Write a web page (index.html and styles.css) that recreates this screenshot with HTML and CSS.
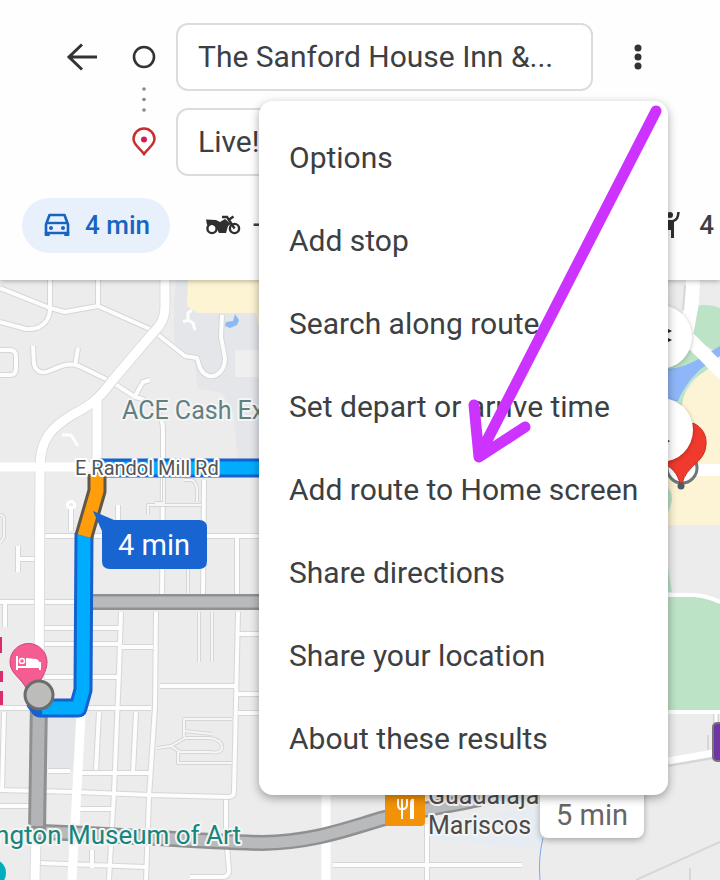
FILE: index.html
```html
<!DOCTYPE html>
<html lang="en">
<head>
<meta charset="utf-8">
<meta name="viewport" content="width=device-width, initial-scale=1">
<title>Directions</title>
<link rel="stylesheet" href="styles.css">
</head>
<body>
<div class="app">
  <header class="header">
    <div class="route">
      <button class="icon-button" aria-label="Back">
        <svg width="32" height="28" viewBox="0 0 32 28"><path d="M31 14H3M16 1.500L3 14l13 12.500" fill="none" stroke="#333" stroke-width="3"/></svg>
      </button>
      <div class="markers">
        <svg width="28" height="120" viewBox="0 0 28 120">
          <circle cx="14" cy="18" r="10" fill="none" stroke="#333" stroke-width="2.6"/>
          <g fill="#888"><circle cx="14" cy="50" r="1.8"/><circle cx="14" cy="60.500" r="1.8"/><circle cx="14" cy="71" r="1.8"/></g>
          <path d="M14 115C10 109 3.500 106 3.500 100a10.500 10.500 0 0 1 21 0C24.500 106 18 109 14 115z" fill="#fff" stroke="#c5312d" stroke-width="2.500"/>
          <circle cx="14" cy="100.500" r="3" fill="#d81b50"/>
        </svg>
      </div>
      <form class="fields">
        <input class="field" type="text" aria-label="Starting point" value="The Sanford House Inn &amp;...">
        <input class="field" type="text" aria-label="Destination" value="Live!">
      </form>
      <button class="icon-button" aria-label="More options">
        <svg width="10" height="28" viewBox="0 0 10 28"><g fill="#333"><circle cx="5" cy="5" r="3.500"/><circle cx="5" cy="14" r="3.500"/><circle cx="5" cy="23" r="3.500"/></g></svg>
      </button>
    </div>
    <nav class="modes" aria-label="Travel modes">
      <button class="mode mode-active">
        <svg width="28" height="24" viewBox="0 0 28 24"><path fill="none" stroke="#1765c1" stroke-width="2.600" stroke-linejoin="round" d="M3 11.500L6.500 2h15L25 11.500V20H3z"/><path stroke="#1765c1" stroke-width="2.400" d="M3 10h22"/><path fill="#1765c1" d="M1.700 19h5v4h-5zM21.300 19h5v4h-5z"/><circle cx="8" cy="15" r="2" fill="#1765c1"/><circle cx="20" cy="15" r="2" fill="#1765c1"/></svg>
        <span>4 min</span>
      </button>
      <button class="mode mode-bike" aria-label="Motorcycle">
        <svg width="36" height="20" viewBox="0 0 36 20"><g fill="none" stroke="#2f2f2f" stroke-width="2.400"><circle cx="6" cy="13.500" r="4.600"/><circle cx="28.500" cy="13.500" r="4.600"/><path d="M28.500 13.500L21 2h-5M22.500 5l5-3.500"/></g><path fill="#2f2f2f" d="M0 4.500l10 .5 4 2 5-3 6 5-3 2-2 7h-7l-3-6-5-3-4 1z"/></svg>
        <span>—</span>
      </button>
      <button class="mode mode-hail" aria-label="Ride service 4 min">
        <svg width="22" height="28" viewBox="0 0 22 28"><circle cx="11" cy="4" r="3" fill="#2f2f2f"/><path d="M5 9h10v18h-3v-8h-3v8H5z" fill="#2f2f2f"/><path d="M13 10.500c5-1 6-4 6.500-9.500" fill="none" stroke="#2f2f2f" stroke-width="2.600"/></svg>
        <span>4</span>
      </button>
    </nav>
  </header>

  <main class="map">
    <svg class="map-canvas" viewBox="0 280 720 600" preserveAspectRatio="xMidYMin slice" role="img" aria-label="Route map">
      <rect y="280" width="720" height="600" fill="#ececed"/>
      <path fill="#e5e6ea" d="M176 280h84v185h-22l-4-50-12-22-24-4-4-28-20-18v-40zM48 714h28l-3 56H48z"/>
      <path fill="#fdf4d3" d="M188 280h72v52l-4-19h-58l-11-7z"/>
      <path fill="#efeff0" d="M235 350h25v27h-25z"/>
      <path fill="#8ab9f3" d="M233 321l2-7 4 6-2 5-7 3-5-2 1-4z"/>
      <path fill="#e6ecf2" d="M432 822l108-15 4 25-6 18-110-12z"/>

      <path fill="#fdf4d6" d="M668 420l16-24 16-22 20-12v163h-52z"/>
      <path fill="#bce3c6" d="M720 308c-8-3-16-4-24-2l-7 30 31 18zM664 370l30-23 14 22-14 10q-10 10-12 26h-18zM668 488q8 8 0 24zM668 568l4 24h-4z"/>
      <path fill="#8fb6f8" d="M664 369c22 0 34-10 56-23v10c-18 10-32 22-42 45h-14z"/>
      <path fill="#bce3c6" d="M660 597h36c10 1 18 4 24 7v106h-60z"/>

      <g fill="none" stroke-linejoin="round">
        <g stroke="#d5d6d8" stroke-width="6">
          <path d="M0 288l50 20 15 4 33-6 54 24 33 26 12 2 3 10c8 15 25 8 25-10l-4-21 1-22M50 280v28c0 16-12 22-24 21l-26-7M98 280v26M33 346l1 18c2 8 8 10 15 7 16-7 20-8 30-5l33 16 23 15c18 3 28 18 28 33v32M78 348l-3 18M135 396l8-14 7-2"/>
          <path d="M0 350h10q6 0 6 7v11q0 7-6 7H0M42 536h220M0 602h76M5 602v25M163 472l-1 131M204 480l-1 120M237 538v60M118 505v20M71 506v25M18 546v26M18 559h20"/>
          <path d="M43 628h76M43 644h76M43 677h76M121 612l-2 60-5 120-5 88M156 612l-1 95-6 90-3 83M0 708h151M160 686h76M122 647h31M238 612l-4 180q0 5-6 5l-78-2-75-3-75-2M48 771h22M82 773h67M99 712l-3 58M136 712l-3 60M226 800v35l3 35q0 7-7 7h-32M80 809h32M0 806h30M40 863l105 4M238 634h22M238 694h22M238 713h22M4 712l-2 80M92 850v18"/>
          <path d="M427 824v56M333 865h189M668 764l52-9M716 714v20"/>
        </g>
        <g stroke="#fdfdfd" stroke-width="4">
          <path d="M0 288l50 20 15 4 33-6 54 24 33 26 12 2 3 10c8 15 25 8 25-10l-4-21 1-22M50 280v28c0 16-12 22-24 21l-26-7M98 280v26M33 346l1 18c2 8 8 10 15 7 16-7 20-8 30-5l33 16 23 15c18 3 28 18 28 33v32M78 348l-3 18M135 396l8-14 7-2"/>
          <path d="M0 350h10q6 0 6 7v11q0 7-6 7H0M42 536h220M0 602h76M5 602v25M163 472l-1 131M204 480l-1 120M237 538v60M118 505v20M71 506v25M18 546v26M18 559h20"/>
          <path d="M43 628h76M43 644h76M43 677h76M121 612l-2 60-5 120-5 88M156 612l-1 95-6 90-3 83M0 708h151M160 686h76M122 647h31M238 612l-4 180q0 5-6 5l-78-2-75-3-75-2M48 771h22M82 773h67M99 712l-3 58M136 712l-3 60M226 800v35l3 35q0 7-7 7h-32M80 809h32M0 806h30M40 863l105 4M238 634h22M238 694h22M238 713h22M4 712l-2 80M92 850v18"/>
          <path d="M333 865h189M427 824v56"/>
        </g>
        <path stroke="#fdfdfd" stroke-width="3" d="M195 330l-2-7-5-3M183 322l5-2 0-7 4-3M62 435h9l7 11"/>
        <g stroke="#d5d6d8" stroke-width="4">
          <path d="M148 515v-10h53M164 470v33h-9M184 480h8q5 3 5 10v12M199 612v50M212 612v50M188 548v45M157 748l14-2 14-8h25q12 2 12 9t-12 5h-30l-9-6M184 737v-18h48M178 752v11h54M184 731l28 3M0 515q5 0 4 8v14l-4 6"/>
        </g>
        <g stroke="#f6f6f6" stroke-width="2">
          <path d="M148 515v-10h53M164 470v33h-9M184 480h8q5 3 5 10v12M199 612v50M212 612v50M188 548v45M157 748l14-2 14-8h25q12 2 12 9t-12 5h-30l-9-6M184 737v-18h48M178 752v11h54M184 731l28 3M0 515q5 0 4 8v14l-4 6"/>
        </g>
        <path stroke="#dcddde" stroke-width="11" d="M165 280v25c0 14-4 20-13 29l-40 47c-14 20-25 26-40 34-20 12-32 24-32 52l-1 230-4 183M97 400v70"/>
        <g stroke="#fff">
          <path stroke-width="9" d="M165 280v25c0 14-4 20-13 29l-40 47c-14 20-25 26-40 34-20 12-32 24-32 52l-1 230-4 183M97 400v70M0 467h262M81 715l-9 165M326 790v90"/>
          <circle cx="71" cy="505" r="3.500" stroke-width="3"/>
          <path stroke-width="14" d="M693 280l-1 22-6 34 38 38"/>
          <path stroke-width="12" d="M696 470h24"/>
          <path stroke-width="4" d="M668 595h26q14 1 26 7M668 712h52"/>
          <path stroke-width="7" d="M668 761l52-9"/>
          <path stroke-width="3" d="M716 714v20"/>
        </g>
        <path stroke="#d7d7d8" stroke-width="2" d="M636 880l84-38M690 880v-12M708 735v15M683 310l2-25"/>
        <path stroke="#7fa7e8" stroke-width="1" d="M543 838q-5 20-3 42"/>

        <path stroke="#8f9091" stroke-width="16" d="M90 602h172M37 832c80 2 160 10 225 11 55-1 90-16 123-25 30-7 60-12 95-19"/>
        <path stroke="#b9babb" stroke-width="11" d="M90 602h172M37 832c80 2 160 10 225 11 55-1 90-16 123-25 30-7 60-12 95-19"/>
        <path stroke="#8f9091" stroke-width="18" d="M39 700l-2 134"/>
        <path stroke="#b3b4b5" stroke-width="12" d="M39 700l-2 126"/>

        <path stroke="#1461cf" stroke-width="19" d="M262 468H97M84 533l-1 157-5 18H40l-6-8"/>
        <path stroke="#00acfd" stroke-width="13" d="M262 468H97M84 533l-1 157-5 18H42"/>
        <path stroke="#635747" stroke-width="19" d="M97 474v17L84 536"/>
        <path stroke="#ff9d0a" stroke-width="13" d="M97 474v17L84 536"/>
      </g>

      <path d="M27 690C22 678 10 674 10 662a18.500 18.500 0 0 1 37 0C47 672 40 680 36 690z" fill="#f45c92" stroke="#cf4379" stroke-width="1"/>
      <path d="M17 656v14M17 667h24M40 670v-8" stroke="#fff" stroke-width="2" fill="none"/><path fill="#fff" d="M26 658l10 1q4 1 4 7H26z"/><circle cx="22" cy="661" r="2.500" fill="none" stroke="#fff" stroke-width="1.500"/>
      <circle cx="39" cy="695" r="14" fill="#bcbcbb" stroke="#6c6c6c" stroke-width="3"/>
      <path fill="#da2b6e" d="M0 637h2v16H0zM0 671h3v11H0zM0 691h3v14H0z"/>
      <circle cx="-8" cy="873" r="14" fill="#00aebd"/>

      <path d="M93 511l21 9h85q8 0 8 8v33q0 8-8 8h-89q-8 0-8-8v-30z" fill="#1864d0"/>
      <text class="bubble-text" x="118" y="555">4 min</text>

      <text class="label label-store" x="122" y="419">ACE Cash Ex</text>
      <text class="label label-road" x="75" y="475">E Randol Mill Rd</text>
      <text class="label label-museum" x="241" y="844" text-anchor="end">ngton Museum of Art</text>
      <rect x="385" y="784" width="40" height="42" rx="4" fill="#f29208"/>
      <path d="M398 799v5q0 5 3 5h2q4 0 4-5v-5M402 799v20" stroke="#fff" stroke-width="2" fill="none"/><path d="M410 819v-15q0-6 4-5v20z" fill="#fff"/>
      <text class="label label-food" x="428" y="804">Guadalaja</text>
      <text class="label label-food" x="428" y="834">Mariscos</text>
      <rect class="alt-card" x="540" y="780" width="104" height="58" rx="8"/>
      <text class="alt-text" x="556" y="825">5 min</text>

      <circle cx="682" cy="468" r="15" fill="#fff" stroke="#6c7778" stroke-width="3"/>
      <path d="M680 484c-2-10-8-18-22-23l35-38c9 4 14 12 13 22-1 18-20 20-24 39z" fill="#f03a2d" stroke="#c52d23" stroke-width="1"/>
      <circle cx="681" cy="486" r="3.500" fill="#4e5a66"/>
      <circle class="fab" cx="660" cy="337" r="32"/>
      <circle class="fab" cx="661" cy="430" r="32"/>
      <path fill="#222" d="M664 327l8 4-8 4zM664 336l8 4-8 4zM664 438l6 3-6 4z"/>
      <rect x="713" y="723" width="30" height="38" rx="4" fill="#6f35a5" stroke="#777" stroke-width="2"/>
    </svg>
  </main>

  <div class="menu" role="menu">
    <button class="menu-item" role="menuitem">Options</button>
    <button class="menu-item" role="menuitem">Add stop</button>
    <button class="menu-item" role="menuitem">Search along route</button>
    <button class="menu-item" role="menuitem">Set depart or arrive time</button>
    <button class="menu-item" role="menuitem">Add route to Home screen</button>
    <button class="menu-item" role="menuitem">Share directions</button>
    <button class="menu-item" role="menuitem">Share your location</button>
    <button class="menu-item" role="menuitem">About these results</button>
    <svg class="pointer" width="409" height="400" viewBox="259 101 409 400" aria-hidden="true"><path d="M656 111L479 456M474 405l5 52 46-30" fill="none" stroke="#cc33ff" stroke-width="11" stroke-linecap="round" stroke-linejoin="round"/></svg>
  </div>
</div>
</body>
</html>
```
FILE: styles.css
```css
* {
  box-sizing: border-box;
}

body {
  margin: 0;
  background: #fff;
  color: #3c4043;
  font-family: Roboto, "Liberation Sans", sans-serif;
}

button,
input {
  font: inherit;
  color: inherit;
}

button {
  border: 0;
  padding: 0;
  background: none;
}

svg {
  display: block;
}

.app {
  position: relative;
  display: flex;
  flex-direction: column;
  min-height: 100vh;
  overflow: hidden;
}

.header {
  position: relative;
  z-index: 1;
  padding-top: 23px;
  padding-bottom: 27px;
  background: #fefefe;
  box-shadow: 0 1px 5px rgba(0, 0, 0, 0.3);
}

.route {
  display: grid;
  grid-template-columns: 32px 28px 1fr 10px;
  column-gap: 32px;
  padding: 0 77px 0 66px;
}

.icon-button {
  display: flex;
  align-items: center;
  justify-content: center;
  height: 68px;
}

.markers {
  padding-top: 16px;
}

.fields {
  display: flex;
  flex-direction: column;
  gap: 17px;
  margin: 0 8px 0 -14px;
}

.field {
  width: 100%;
  height: 68px;
  padding: 0 20px 2px;
  border: 2px solid #dcdcdc;
  border-radius: 12px;
  background: #fff;
  font-size: 30px;
  text-overflow: ellipsis;
}

.modes {
  display: grid;
  grid-template-columns: 148px 1fr auto;
  column-gap: 36px;
  padding: 0 6px 0 22px;
  margin-top: 22px;
  font-size: 26px;
}

.mode {
  display: flex;
  align-items: center;
  height: 55px;
  padding-bottom: 2px;
  font-weight: 500;
}

.mode-active {
  gap: 14px;
  padding-left: 21px;
  border-radius: 28px;
  background: #e8f0fc;
  color: #1765c1;
}

.mode-bike {
  gap: 10px;
}

.mode-hail {
  gap: 18px;
}

.map {
  display: flex;
  flex: 1;
  min-height: 0;
}

.map-canvas {
  flex: 1;
  width: 100%;
}

.label {
  paint-order: stroke;
  stroke: #f4f4f4;
  stroke-width: 4px;
  stroke-linejoin: round;
}

.label-store {
  fill: #638080;
  font-size: 25px;
}

.label-road {
  fill: #555;
  stroke: #fff;
  font-size: 20px;
}

.label-museum {
  fill: #16857c;
  font-size: 26px;
}

.label-food {
  fill: #4c4a48;
  font-size: 25px;
}

.bubble-text {
  fill: #fff;
  font-size: 29px;
}

.alt-card {
  fill: #fff;
  filter: drop-shadow(0 2px 3px rgba(0, 0, 0, 0.3));
}

.alt-text {
  fill: #666;
  font-size: 29px;
}

.fab {
  fill: #fff;
  filter: drop-shadow(0 1px 2px rgba(0, 0, 0, 0.25));
}

.menu {
  position: absolute;
  z-index: 2;
  top: 101px;
  right: 52px;
  display: flex;
  flex-direction: column;
  width: 409px;
  padding: 15px 0;
  border-radius: 14px;
  background: #fff;
  box-shadow: 0 3px 10px rgba(0, 0, 0, 0.35);
}

.menu-item {
  height: 83px;
  padding: 0 30px;
  font-size: 30px;
  text-align: left;
  white-space: nowrap;
}

.pointer {
  position: absolute;
  top: 0;
  left: 0;
  pointer-events: none;
}
```
